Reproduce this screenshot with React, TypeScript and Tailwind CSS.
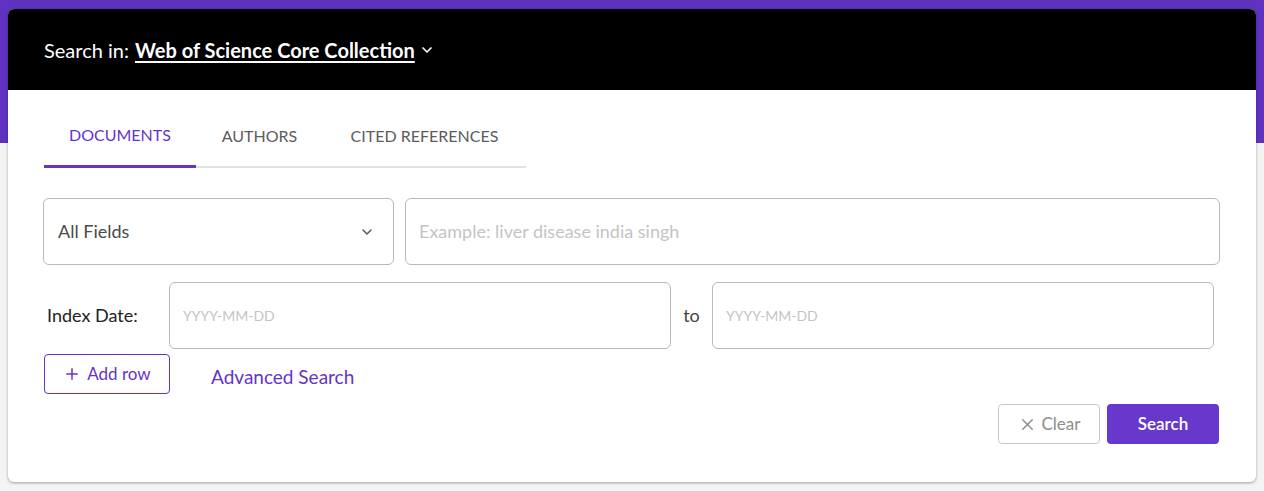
import React from 'react';
import { ChevronDown, Plus, X } from 'lucide-react';

const font = { fontFamily: '"Source Sans Pro", Lato, "Noto Sans", sans-serif' };

export default function App() {
  const tabs = [
    { label: 'DOCUMENTS', w: 'w-[152px]' },
    { label: 'AUTHORS', w: 'w-[127px]' },
    { label: 'CITED REFERENCES', w: 'w-[203px]' },
  ];

  return (
    <div className="relative min-h-[491px] w-[1264px] bg-[#f4f4f4]" style={font}>
      {/* purple band behind the card */}
      <div className="absolute inset-x-0 top-0 h-[143px] bg-[#5f33bf]" />

      <div className="relative px-2 pt-[9px]">
        <div className="overflow-hidden rounded-md bg-white shadow-[0_1px_3px_rgba(0,0,0,0.35)]">
          {/* Header */}
          <div className="flex h-[81px] items-center bg-black pl-9 pt-[1px] text-[20px] text-white">
            <span>Search in:</span>
            <span className="ml-[6px] font-bold underline underline-offset-[3px] decoration-2">
              Web of Science Core Collection
            </span>
            <ChevronDown className="ml-1 h-4 w-4" strokeWidth={2.5} />
          </div>

          <div className="px-9 pb-[38px]">
            {/* Tabs */}
            <div className="mt-[16px] flex w-[482px] border-b-2 border-[#e2e2e2]">
              {tabs.map((t, i) => (
                <div
                  key={t.label}
                  className={`-mb-[2px] flex h-[62px] items-center justify-center whitespace-nowrap pb-[2px] text-[16px] ${t.w} ${
                    i === 0
                      ? 'border-b-[3px] border-[#6434c8] text-[#6434c8]'
                      : 'text-[#5c5c5c]'
                  }`}
                >
                  {t.label}
                </div>
              ))}
            </div>

            {/* Row 1 */}
            <div className="-ml-px mt-[30px] flex gap-[11px]">
              <div className="flex h-[67px] w-[351px] items-center justify-between rounded-md border border-[#b8b8b8] px-[14px] text-[18px] text-[#4a4a4a]">
                <span>All Fields</span>
                <ChevronDown className="mr-[4px] h-4 w-4 text-[#555]" strokeWidth={2.2} />
              </div>
              <div className="flex h-[67px] w-[815px] items-center rounded-md border border-[#b8b8b8] px-[13px] text-[18px] text-[#c4c4c4]">
                Example: liver disease india singh
              </div>
            </div>

            {/* Row 2 */}
            <div className="mt-[17px] flex items-center">
              <span className="w-[125px] pl-[3px] text-[18px] text-[#222]">Index Date:</span>
              <div className="flex h-[67px] w-[502px] items-center rounded-md border border-[#b8b8b8] px-[13px] text-[14px] text-[#c4c4c4]">
                YYYY-MM-DD
              </div>
              <span className="w-[41px] text-center text-[18px] text-[#444]">to</span>
              <div className="flex h-[67px] w-[502px] items-center rounded-md border border-[#b8b8b8] px-[13px] text-[14px] text-[#c4c4c4]">
                YYYY-MM-DD
              </div>
            </div>

            {/* Row 3 */}
            <div className="mt-[5px] flex items-center">
              <button className="flex h-[40px] w-[126px] items-center justify-center gap-[6px] rounded border border-[#6434c8] text-[17px] text-[#6434c8]">
                <Plus className="h-[18px] w-[18px]" strokeWidth={2} />
                Add row
              </button>
              <span className="ml-[41px] mt-[6px] text-[19px] text-[#6434c8]">Advanced Search</span>
            </div>

            {/* Actions */}
            <div className="mt-[10px] flex justify-end gap-[7px] pr-[1px]">
              <button className="flex h-[40px] w-[102px] items-center justify-center gap-[5px] rounded border border-[#c6c6c6] text-[17px] text-[#8d8d8d]">
                <X className="h-[19px] w-[19px]" strokeWidth={1.8} />
                Clear
              </button>
              <button className="flex h-[40px] w-[112px] items-center justify-center rounded bg-[#6838cd] text-[17px] font-semibold text-white">
                Search
              </button>
            </div>
          </div>
        </div>
      </div>
    </div>
  );
}
